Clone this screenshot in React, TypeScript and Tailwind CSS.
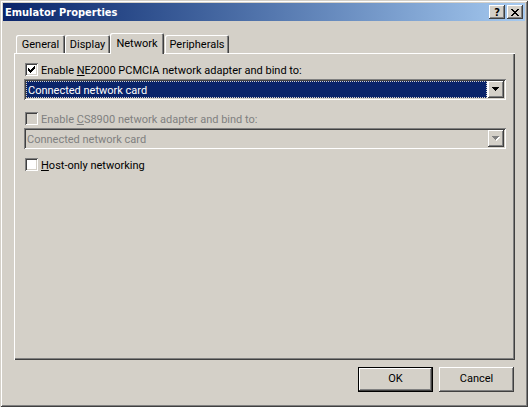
import React from "react"

const font = "font-['Roboto','Liberation_Sans',sans-serif]"
const titleFont = "font-['DejaVu_Sans_Condensed','Liberation_Sans',sans-serif]"

const raisedBtn =
  "shadow-[inset_-1px_-1px_#404040,inset_1px_1px_#ffffff,inset_-2px_-2px_#808080,inset_2px_2px_#d4d0c8]"
const sunken =
  "shadow-[inset_1px_1px_#808080,inset_-1px_-1px_#ffffff,inset_2px_2px_#404040,inset_-2px_-2px_#d4d0c8]"

function CheckMark() {
  // classic 7x7 check, drawn column by column
  const starts = [2, 3, 4, 3, 2, 1, 0]
  return (
    <svg width="13" height="13" viewBox="0 0 13 13" shapeRendering="crispEdges" className="block">
      {starts.map((s, i) => (
        <rect key={i} x={3 + i} y={3 + s} width="1" height="3" fill="#000000" />
      ))}
    </svg>
  )
}

function Checkbox({ checked, disabled }: { checked?: boolean; disabled?: boolean }) {
  return (
    <span className={`block w-[13px] h-[13px] shrink-0 ${sunken} ${disabled ? "bg-[#d4d0c8]" : "bg-white"}`}>
      {checked && <CheckMark />}
    </span>
  )
}

function Arrow({ disabled }: { disabled?: boolean }) {
  const rows = [0, 1, 2, 3]
  return (
    <svg width="8" height="5" viewBox="0 0 8 5" shapeRendering="crispEdges" className="block">
      {disabled &&
        rows.map((r) => (
          <rect key={"s" + r} x={r + 1} y={r + 1} width={7 - r * 2} height="1" fill="#ffffff" />
        ))}
      {rows.map((r) => (
        <rect key={r} x={r} y={r} width={7 - r * 2} height="1" fill={disabled ? "#808080" : "#000000"} />
      ))}
    </svg>
  )
}

function Select({ text, active, disabled }: { text: string; active?: boolean; disabled?: boolean }) {
  return (
    <div className={`flex h-[21px] p-[2px] ${sunken} ${disabled ? "bg-[#d4d0c8]" : "bg-white"}`}>
      <div
        className={`flex-1 mr-[1px] flex items-center pl-[1px] pt-[1px] text-[11px] leading-[13px] ${
          active
            ? "bg-[#0a246a] text-white border border-dotted border-[#d4d0c8]"
            : disabled
            ? "text-[#808080]"
            : "text-black"
        }`}
      >
        {text}
      </div>
      <div className={`w-[16px] h-[17px] bg-[#d4d0c8] flex items-center justify-center ${raisedBtn}`}>
        <Arrow disabled={disabled} />
      </div>
    </div>
  )
}

function CheckRow({
  checked,
  disabled,
  children,
}: {
  checked?: boolean
  disabled?: boolean
  children: React.ReactNode
}) {
  return (
    <div className="flex items-center gap-[3px] ml-[1px] h-[13px]">
      <Checkbox checked={checked} disabled={disabled} />
      <span className={`text-[11px] leading-[13px] pt-[1px] ${disabled ? "text-[#808080]" : "text-black"}`}>
        {children}
      </span>
    </div>
  )
}

function Tab({ label, width, selected }: { label: string; width: string; selected?: boolean }) {
  return (
    <div
      className={`${width} ${
        selected ? "h-[21px] pt-[4px] relative z-10" : "h-[18px] mt-[2px] pt-[3px]"
      } bg-[#d4d0c8] rounded-t-[2px] text-center text-[11px] leading-[13px] text-black shadow-[inset_1px_1px_#ffffff,inset_-1px_0_#404040,inset_-2px_0_#808080]`}
    >
      {label}
    </div>
  )
}

function CloseGlyph() {
  const rows = [0, 1, 2, 3, 4, 5, 6]
  return (
    <svg width="8" height="7" viewBox="0 0 8 7" shapeRendering="crispEdges" className="block">
      {rows.map((r) => (
        <g key={r}>
          <rect x={r} y={r} width="2" height="1" fill="#000000" />
          <rect x={6 - r} y={r} width="2" height="1" fill="#000000" />
        </g>
      ))}
    </svg>
  )
}

export default function App() {
  return (
    <div
      className={`w-[528px] h-[407px] bg-[#d4d0c8] p-[3px] flex flex-col ${font} shadow-[inset_1px_1px_#d4d0c8,inset_-1px_-1px_#404040,inset_2px_2px_#ffffff,inset_-2px_-2px_#808080]`}
    >
      {/* Title bar */}
      <div className="h-[18px] flex items-center pl-[2px] pr-[2px] bg-linear-to-r from-[#0a246a] to-[#a6caf0]">
        <span className={`${titleFont} text-white font-bold text-[11px] leading-[13px]`}>Emulator Properties</span>
        <div className="ml-auto flex gap-[2px]">
          <div className={`w-[16px] h-[14px] bg-[#d4d0c8] flex items-center justify-center ${raisedBtn}`}>
            <span className={`${titleFont} text-[11px] leading-[11px] font-bold text-black`}>?</span>
          </div>
          <div className={`w-[16px] h-[14px] bg-[#d4d0c8] flex items-center justify-center ${raisedBtn}`}>
            <CloseGlyph />
          </div>
        </div>
      </div>

      {/* Tabs + panel */}
      <div className="pl-[11px] pt-[12px]">
        <div className="flex items-start h-[20px] pl-[2px]">
          <Tab label="General" width="w-[49px]" />
          <Tab label="Display" width="w-[45px]" />
          <Tab label="Network" width="w-[54px]" selected />
          <div className="ml-[1px]">
            <Tab label="Peripherals" width="w-[64px]" />
          </div>
        </div>
        <div className="w-[501px] h-[307px] pt-[10px] pl-[10px] pr-[9px] shadow-[inset_1px_1px_#ffffff,inset_-1px_-1px_#404040,inset_-2px_-2px_#808080]">
          <CheckRow checked>
            Enable <span className="underline">N</span>E2000 PCMCIA network adapter and bind to:
          </CheckRow>
          <div className="mt-[3px]">
            <Select text="Connected network card" active />
          </div>
          <div className="mt-[12px]">
            <CheckRow disabled>
              Enable <span className="underline">C</span>S8900 network adapter and bind to:
            </CheckRow>
          </div>
          <div className="mt-[3px]">
            <Select text="Connected network card" disabled />
          </div>
          <div className="mt-[9px]">
            <CheckRow>
              <span className="underline">H</span>ost-only networking
            </CheckRow>
          </div>
        </div>
      </div>

      {/* Buttons */}
      <div className="flex justify-end gap-[6px] mt-[7px] pr-[11px]">
        <button
          className={`w-[75px] h-[25px] bg-[#d4d0c8] text-[11px] text-black shadow-[inset_0_0_0_1px_#000000,inset_-2px_-2px_#404040,inset_2px_2px_#ffffff,inset_-3px_-3px_#808080,inset_3px_3px_#d4d0c8]`}
        >
          OK
        </button>
        <button className={`w-[75px] h-[25px] bg-[#d4d0c8] text-[11px] text-black ${raisedBtn}`}>Cancel</button>
      </div>
    </div>
  )
}
